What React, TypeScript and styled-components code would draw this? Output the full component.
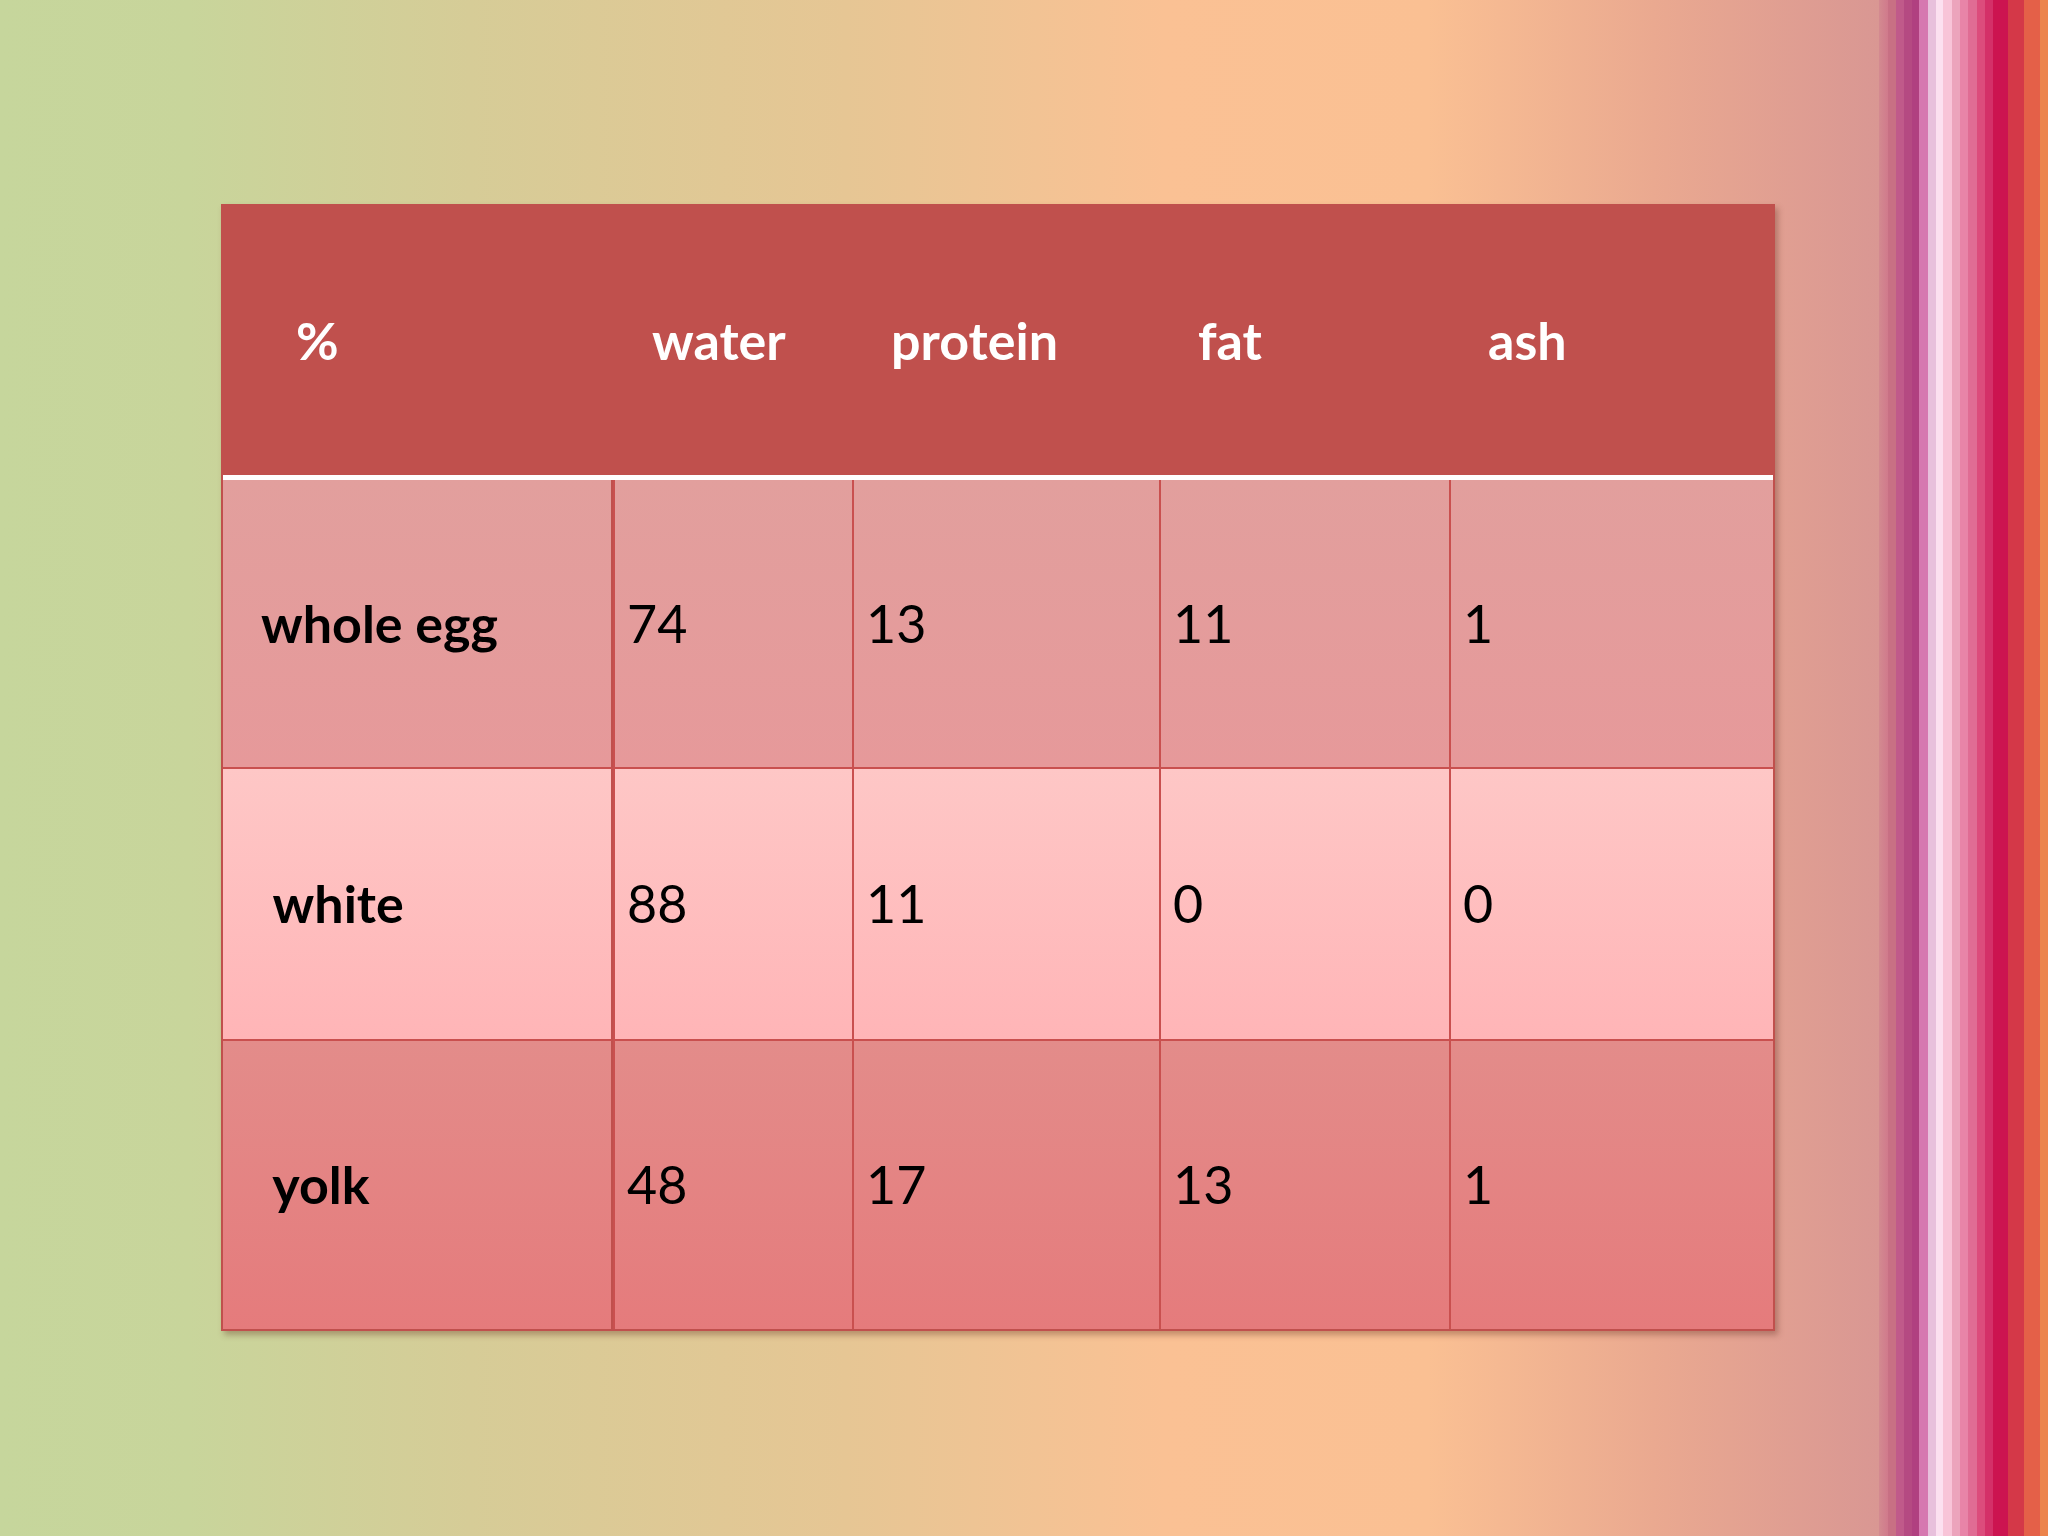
import React from 'react';
import styled, { createGlobalStyle } from 'styled-components';

const GlobalStyle = createGlobalStyle`
  html, body {
    margin: 0;
    padding: 0;
  }
  body {
    width: 2048px;
    height: 1536px;
    overflow: hidden;
    font-family: Lato, "Noto Sans", sans-serif;
  }
`;

const Slide = styled.div`
  display: flex;
  width: 2048px;
  height: 1536px;
`;

const Canvas = styled.div`
  flex: 1;
  padding: 204px 0 0 221px;
  box-sizing: border-box;
  background: linear-gradient(
    to right,
    #c6d69c 0%,
    #c8d59b 10%,
    #d6cc97 25%,
    #e6c694 45%,
    #fac194 62%,
    #fac093 76%,
    #eaa990 88%,
    #d99793 100%
  );
`;

const Stripes = styled.div`
  width: 169px;
  background: linear-gradient(
    to right,
    #d38a90 0px, #d07a8c 9px,
    #c87084 9px, #c87084 17px,
    #c05a8a 17px, #c05a8a 25px,
    #b54a82 25px, #b54a82 33px,
    #b04080 33px, #b04080 40px,
    #d678b0 40px, #d678b0 49px,
    #e8c0dc 49px, #e8c0dc 57px,
    #fce0f0 57px, #fce0f0 64px,
    #f8c4d8 64px, #f8c4d8 73px,
    #eca4bc 73px, #eca4bc 81px,
    #e884a8 81px, #e884a8 89px,
    #e06c94 89px, #e06c94 98px,
    #dc4c7c 98px, #dc4c7c 106px,
    #d43068 106px, #d43068 114px,
    #cc1450 114px, #cc1450 129px,
    #d43848 129px, #d43848 145px,
    #e46048 145px, #e46048 161px,
    #ec844c 161px, #ec844c 169px
  );
`;

const Table = styled.div`
  width: 1554px;
  display: grid;
  grid-template-columns: 390px 239px 307px 290px 324px;
  grid-template-rows: 274px 289px 272px 288px;
  border: 2px solid #c0504d;
  box-sizing: border-box;
  box-shadow: 3px 4px 6px rgba(90, 40, 30, 0.35);
  background: #c0504d;
`;

const HeadCell = styled.div<{ $indent?: number }>`
  display: flex;
  align-items: center;
  padding-left: ${(p) => 39 + (p.$indent || 0)}px;
  padding-bottom: 2px;
  background: #c0504d;
  border-bottom: 5px solid #ffffff;
  color: #ffffff;
  font-weight: 700;
  font-size: 52px;
  white-space: pre;
`;

const rowFills = [
  ['#e29f9d', '#e6999a'],
  ['#fec7c6', '#ffb5b7'],
  ['#e38c8a', '#e57b7c'],
];

const Cell = styled.div<{ $row: number; $first?: boolean; $last?: boolean }>`
  display: flex;
  align-items: center;
  padding-left: ${(p) => (p.$first ? 38 : 12)}px;
  padding-bottom: 2px;
  background: linear-gradient(
    to bottom,
    ${(p) => rowFills[p.$row][0]},
    ${(p) => rowFills[p.$row][1]}
  );
  border-left: ${(p) => (p.$first ? 'none' : '2px solid #c9504f')};
  border-right: ${(p) => (p.$first ? '2px solid #c0504d' : 'none')};
  border-bottom: ${(p) => (p.$last ? 'none' : '2px solid #c9504f')};
  color: #000000;
  font-size: 52px;
  font-weight: ${(p) => (p.$first ? 700 : 400)};
  white-space: pre;
`;

const head = ['%', 'water', 'protein', 'fat', 'ash'];

const rows = [
  ['whole egg', '74', '13', '11', '1'],
  [' white', '88', '11', '0', '0'],
  [' yolk', '48', '17', '13', '1'],
];

export default function App() {
  return (
    <Slide>
      <GlobalStyle />
      <Canvas>
        <Table>
          {head.map((h, i) => (
            <HeadCell key={h} $indent={i === 0 ? 34 : 0}>
              {h}
            </HeadCell>
          ))}
          {rows.map((r, ri) =>
            r.map((v, ci) => (
              <Cell
                key={ri + '-' + ci}
                $row={ri}
                $first={ci === 0}
                $last={ri === rows.length - 1}
              >
                {v}
              </Cell>
            ))
          )}
        </Table>
      </Canvas>
      <Stripes />
    </Slide>
  );
}
